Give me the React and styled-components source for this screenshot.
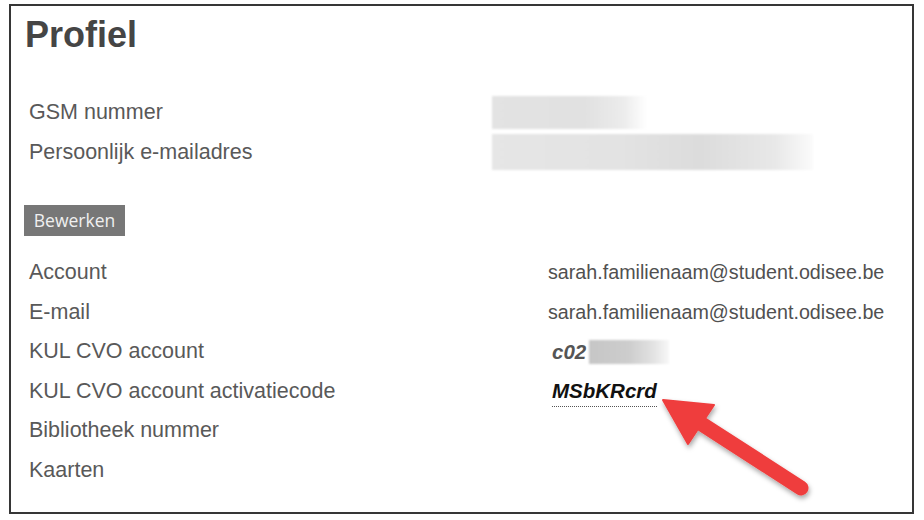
import React from "react";
import styled, { createGlobalStyle } from "styled-components";

const GlobalStyle = createGlobalStyle`
  html, body {
    margin: 0;
    padding: 0;
    background: #ffffff;
  }
  body {
    font-family: "Liberation Sans", Arial, sans-serif;
  }
`;

const Page = styled.div`
  width: 924px;
  height: 520px;
  padding: 4px 0 0 9px;
  box-sizing: border-box;
`;

const Frame = styled.section`
  position: relative;
  width: 905px;
  height: 510px;
  box-sizing: border-box;
  border: 2px solid #363636;
  padding: 7px 0 0 14px;
`;

const Title = styled.h1`
  margin: 0;
  font-size: 36px;
  line-height: 44px;
  font-weight: bold;
  color: #454545;
`;

const Table = styled.div`
  display: grid;
  grid-template-columns: ${(p) => p.$labelWidth}px 1fr;
  margin-top: ${(p) => p.$top}px;
`;

const Label = styled.div`
  height: ${(p) => p.$h}px;
  line-height: ${(p) => p.$h}px;
  padding-left: 4px;
  font-size: 21.5px;
  color: #595959;
  white-space: nowrap;
`;

const Value = styled.div`
  height: ${(p) => p.$h}px;
  display: flex;
  align-items: center;
  font-size: 19.7px;
  color: #505050;
  white-space: nowrap;
`;

const Redacted = styled.div`
  width: ${(p) => p.$w}px;
  height: ${(p) => p.$bh}px;
  margin-left: ${(p) => p.$gap || 0}px;
  background: ${(p) => p.$bg};
  filter: blur(0.8px);
`;

const Code = styled.span`
  margin-left: 4px;
  font-size: 20.5px;
  font-weight: bold;
  font-style: italic;
  color: ${(p) => (p.$dark ? "#111111" : "#555555")};
  border-bottom: ${(p) => (p.$dotted ? "1px dotted #555" : "none")};
  padding-bottom: ${(p) => (p.$dotted ? "3px" : "0")};
  margin-top: ${(p) => (p.$dotted ? "4px" : "0")};
`;

const EditButton = styled.button`
  display: block;
  margin: 33px 0 0 -1px;
  width: 101px;
  height: 31px;
  padding: 0;
  border: none;
  background: #777777;
  color: #f0f0f0;
  font-family: "Open Sans", "Noto Sans", sans-serif;
  font-size: 17.5px;
  line-height: 31px;
  cursor: pointer;
`;

const Arrow = styled.svg`
  position: absolute;
  left: 639px;
  top: 384px;
  overflow: visible;
`;

const GREY_SHORT = "linear-gradient(to right, #e3e3e3 0%, #e1e1e1 60%, #ececec 85%, #ffffff 100%)";
const GREY_LONG = "linear-gradient(to right, #e6e6e6 0%, #e3e3e3 40%, #dcdcdc 65%, #e8e8e8 88%, #fbfbfb 100%)";
const GREY_CODE = "linear-gradient(to right, #c6c6c6 0%, #cdcdcd 50%, #e2e2e2 80%, #f8f8f8 100%)";

const accountRows = [
  { label: "Account", value: "sarah.familienaam@student.odisee.be" },
  { label: "E-mail", value: "sarah.familienaam@student.odisee.be" },
  { label: "KUL CVO account", code: "c02", redacted: true },
  { label: "KUL CVO account activatiecode", code: "MSbKRcrd", dark: true, dotted: true },
  { label: "Bibliotheek nummer" },
  { label: "Kaarten" },
];

const App = () => {
  return (
    <Page>
      <GlobalStyle />
      <Frame>
        <Title>Profiel</Title>

        <Table $labelWidth={467} $top={35}>
          <Label $h={40}>GSM nummer</Label>
          <Value $h={40}>
            <Redacted $w={155} $bh={33} $bg={GREY_SHORT} />
          </Value>
          <Label $h={40}>Persoonlijk e-mailadres</Label>
          <Value $h={40}>
            <Redacted $w={321} $bh={36} $bg={GREY_LONG} />
          </Value>
        </Table>

        <EditButton>Bewerken</EditButton>

        <Table $labelWidth={523} $top={17}>
          {accountRows.map((row) => (
            <React.Fragment key={row.label}>
              <Label $h={39.5}>{row.label}</Label>
              <Value $h={39.5}>
                {row.value}
                {row.code && (
                  <Code $dark={row.dark} $dotted={row.dotted}>
                    {row.code}
                  </Code>
                )}
                {row.redacted && <Redacted $w={80} $bh={24} $gap={3} $bg={GREY_CODE} />}
              </Value>
            </React.Fragment>
          ))}
        </Table>

        <Arrow width="170" height="115" viewBox="0 0 170 115">
          <defs>
            <filter id="arrowShadow" x="-20%" y="-20%" width="140%" height="140%">
              <feDropShadow dx="1" dy="3" stdDeviation="2.5" floodColor="#000" floodOpacity="0.35" />
            </filter>
          </defs>
          <g filter="url(#arrowShadow)" fill="#ef3d3d" stroke="#ef3d3d">
            <line x1="44" y1="29" x2="151" y2="98" strokeWidth="15" strokeLinecap="round" />
            <polygon points="13,10 64,15 38,54" strokeWidth="2" strokeLinejoin="round" />
          </g>
        </Arrow>
      </Frame>
    </Page>
  );
};

export default App;
